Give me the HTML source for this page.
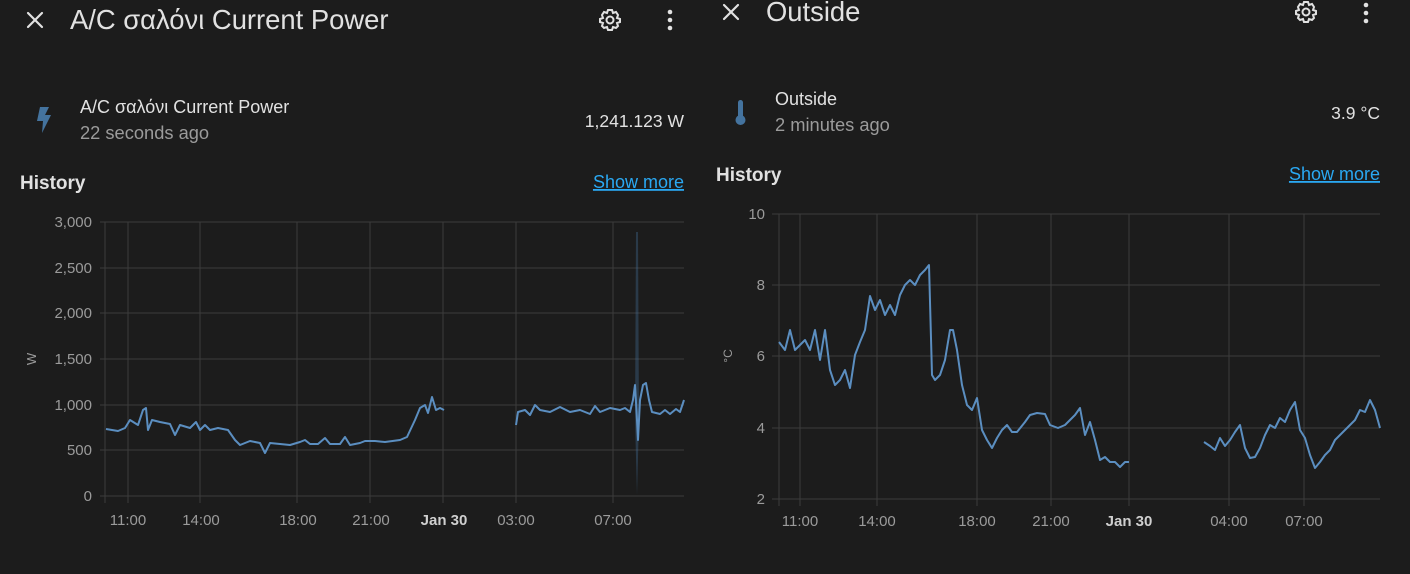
<!DOCTYPE html>
<html><head><meta charset="utf-8"><style>
html,body{margin:0;padding:0;background:#1c1c1c;width:1410px;height:574px;overflow:hidden}
svg{display:block;font-family:"Liberation Sans","DejaVu Sans",sans-serif}
</style></head><body>
<svg width="1410" height="574" viewBox="0 0 1410 574" xmlns="http://www.w3.org/2000/svg">
<rect width="1410" height="574" fill="#1c1c1c"/>
<!-- LEFT PANEL -->
<g stroke="#e1e1e1" stroke-width="2.2" stroke-linecap="round"><line x1="28" y1="13" x2="42" y2="27"/><line x1="42" y1="13" x2="28" y2="27"/></g>
<text x="70" y="29" font-size="27.4" fill="#e1e1e1">A/C σαλόνι Current Power</text>
<g transform="translate(610,20)" fill="none" stroke="#e1e1e1" stroke-width="2"><circle r="3.5"/><path d="M-2,-10 L2,-10 L3,-7 L6,-8 L8,-5 L7,-2 L10,-1 L10,2 L7,3 L8,6 L6,8 L3,7 L2,10 L-2,10 L-3,7 L-6,8 L-8,6 L-7,3 L-10,2 L-10,-1 L-7,-2 L-8,-5 L-6,-8 L-3,-7 Z"/></g>
<g fill="#e1e1e1"><circle cx="670" cy="12" r="2.3"/><circle cx="670" cy="20" r="2.3"/><circle cx="670" cy="28" r="2.3"/></g>
<path d="M40,107 L49,107 L45,115 L51,115 L42,133 L43,121 L37,121 Z" fill="#44739e"/>
<text x="80" y="113" font-size="18" fill="#e1e1e1">A/C σαλόνι Current Power</text>
<text x="80" y="139" font-size="18.3" fill="#9b9b9b">22 seconds ago</text>
<text x="684" y="127" font-size="17.5" fill="#e1e1e1" text-anchor="end">1,241.123 W</text>
<text x="20" y="189" font-size="19" font-weight="bold" fill="#e1e1e1">History</text>
<text x="684" y="188" font-size="18" fill="#2aa8f2" text-anchor="end" text-decoration="underline">Show more</text>
<g stroke="#3c3c3c" stroke-width="1">
<line x1="100" y1="222" x2="684" y2="222"/><line x1="100" y1="268" x2="684" y2="268"/><line x1="100" y1="313" x2="684" y2="313"/><line x1="100" y1="359" x2="684" y2="359"/><line x1="100" y1="405" x2="684" y2="405"/><line x1="100" y1="450" x2="684" y2="450"/><line x1="100" y1="496" x2="684" y2="496"/>
<line x1="105" y1="222" x2="105" y2="503"/><line x1="128" y1="222" x2="128" y2="503"/><line x1="200" y1="222" x2="200" y2="503"/><line x1="297" y1="222" x2="297" y2="503"/><line x1="370" y1="222" x2="370" y2="503"/><line x1="443" y1="222" x2="443" y2="503"/><line x1="516" y1="222" x2="516" y2="503"/><line x1="613" y1="222" x2="613" y2="503"/>
</g>
<g font-size="15" fill="#9b9b9b" text-anchor="end"><text x="92" y="227">3,000</text><text x="92" y="273">2,500</text><text x="92" y="318">2,000</text><text x="92" y="364">1,500</text><text x="92" y="410">1,000</text><text x="92" y="455">500</text><text x="92" y="501">0</text></g>
<text x="36" y="359" font-size="13" fill="#9b9b9b" transform="rotate(-90 36 359)" text-anchor="middle">W</text>
<g font-size="15" fill="#9b9b9b" text-anchor="middle"><text x="128" y="525">11:00</text><text x="201" y="525">14:00</text><text x="298" y="525">18:00</text><text x="371" y="525">21:00</text><text x="444" y="525" font-weight="bold" fill="#cfcfcf">Jan 30</text><text x="516" y="525">03:00</text><text x="613" y="525">07:00</text></g>
<path d="M636,232 L638,232 L639,420 L637,495 L635,420 Z" fill="#44739e" opacity="0.35"/>
<g fill="none" stroke="#5b8ec0" stroke-width="2" stroke-linejoin="round">
<polyline points="106,429 118,431 125,428 130,420 138,425 143,410 146,408 148,430 152,420 160,422 170,424 175,435 180,425 190,428 196,422 200,430 205,425 210,430 218,428 228,430 235,440 240,445 250,441 260,443 265,453 270,443 280,444 290,445 300,442 305,440 310,444 318,444 325,438 330,444 340,444 345,437 350,445 360,443 365,441 375,441 385,442 400,440 407,437 415,420 420,408 425,405 428,413 432,397 436,410 440,408 444,410"/>
<polyline points="516,425 518,412 525,410 530,415 535,405 540,410 550,412 560,407 570,412 580,410 590,414 595,406 600,412 610,408 620,410 625,408 630,412 633,400 635,385 637,420 638,440 640,400 643,385 646,383 649,400 652,412 660,414 665,410 670,414 676,409 680,412 684,400"/>
</g>
<!-- RIGHT PANEL -->
<g stroke="#e1e1e1" stroke-width="2.2" stroke-linecap="round"><line x1="724" y1="5" x2="738" y2="19"/><line x1="738" y1="5" x2="724" y2="19"/></g>
<text x="766" y="21" font-size="27.4" fill="#e1e1e1">Outside</text>
<g transform="translate(1306,12)" fill="none" stroke="#e1e1e1" stroke-width="2"><circle r="3.5"/><path d="M-2,-10 L2,-10 L3,-7 L6,-8 L8,-5 L7,-2 L10,-1 L10,2 L7,3 L8,6 L6,8 L3,7 L2,10 L-2,10 L-3,7 L-6,8 L-8,6 L-7,3 L-10,2 L-10,-1 L-7,-2 L-8,-5 L-6,-8 L-3,-7 Z"/></g>
<g fill="#e1e1e1"><circle cx="1366" cy="5" r="2.3"/><circle cx="1366" cy="13" r="2.3"/><circle cx="1366" cy="21" r="2.3"/></g>
<rect x="738" y="100" width="5" height="20" rx="2.5" fill="#44739e"/><circle cx="740.5" cy="120" r="5" fill="#44739e"/>
<text x="775" y="105" font-size="18" fill="#e1e1e1">Outside</text>
<text x="775" y="131" font-size="18.3" fill="#9b9b9b">2 minutes ago</text>
<text x="1380" y="119" font-size="17.5" fill="#e1e1e1" text-anchor="end">3.9 °C</text>
<text x="716" y="181" font-size="19" font-weight="bold" fill="#e1e1e1">History</text>
<text x="1380" y="180" font-size="18" fill="#2aa8f2" text-anchor="end" text-decoration="underline">Show more</text>
<g stroke="#3c3c3c" stroke-width="1">
<line x1="772" y1="214" x2="1380" y2="214"/><line x1="772" y1="285" x2="1380" y2="285"/><line x1="772" y1="356" x2="1380" y2="356"/><line x1="772" y1="428" x2="1380" y2="428"/><line x1="772" y1="499" x2="1380" y2="499"/>
<line x1="779" y1="214" x2="779" y2="506"/><line x1="800" y1="214" x2="800" y2="506"/><line x1="877" y1="214" x2="877" y2="506"/><line x1="977" y1="214" x2="977" y2="506"/><line x1="1051" y1="214" x2="1051" y2="506"/><line x1="1129" y1="214" x2="1129" y2="506"/><line x1="1229" y1="214" x2="1229" y2="506"/><line x1="1304" y1="214" x2="1304" y2="506"/>
</g>
<g font-size="15" fill="#9b9b9b" text-anchor="end"><text x="765" y="219">10</text><text x="765" y="290">8</text><text x="765" y="361">6</text><text x="765" y="433">4</text><text x="765" y="504">2</text></g>
<text x="732" y="356" font-size="12" fill="#9b9b9b" transform="rotate(-90 732 356)" text-anchor="middle">°C</text>
<g font-size="15" fill="#9b9b9b" text-anchor="middle"><text x="800" y="526">11:00</text><text x="877" y="526">14:00</text><text x="977" y="526">18:00</text><text x="1051" y="526">21:00</text><text x="1129" y="526" font-weight="bold" fill="#cfcfcf">Jan 30</text><text x="1229" y="526">04:00</text><text x="1304" y="526">07:00</text></g>
<g fill="none" stroke="#5b8ec0" stroke-width="2" stroke-linejoin="round">
<polyline points="779,342 785,350 790,330 795,350 800,345 805,340 810,350 815,330 820,360 825,330 830,370 835,385 840,380 845,370 850,388 855,355 860,342 865,330 870,296 875,310 880,300 885,315 890,305 895,315 900,295 905,285 910,280 915,285 920,275 925,270 929,265 932,375 935,380 940,375 945,360 950,330 953,330 957,350 962,385 967,405 972,410 977,398 982,430 987,440 992,448 997,438 1002,430 1007,425 1012,432 1017,432 1025,422 1030,415 1037,413 1045,414 1050,425 1058,428 1065,425 1070,420 1075,415 1080,408 1085,435 1090,422 1095,440 1100,460 1105,457 1110,462 1115,462 1120,467 1125,462 1129,462"/>
<polyline points="1204,442 1210,446 1215,450 1220,438 1225,446 1230,440 1235,432 1240,425 1245,448 1250,458 1255,457 1260,448 1265,435 1270,425 1275,428 1280,418 1285,422 1290,410 1295,402 1300,430 1305,438 1310,455 1315,468 1320,462 1325,455 1330,450 1335,440 1340,435 1345,430 1350,425 1355,420 1360,410 1365,412 1370,400 1375,410 1380,428"/>
</g>
</svg>
</body></html>
